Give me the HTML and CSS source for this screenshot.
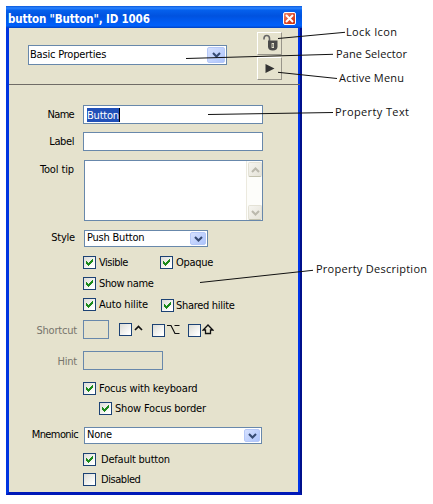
FILE: index.html
```html
<!DOCTYPE html>
<html lang="en">
<head>
<meta charset="utf-8">
<title>Button properties</title>
<link rel="stylesheet" href="styles.css">
</head>
<body>
<svg class="defs" width="0" height="0" aria-hidden="true">
  <symbol id="tick" viewBox="0 0 7 7"><path d="M0 2h1v1h1v1h1v-1h1v-1h1v-1h1v-1h1v3h-1v1h-1v1h-1v1h-1v1h-1v-1h-1v-1h-1z" fill="#1b8a1b"/></symbol>
  <symbol id="chevron" viewBox="0 0 9 6"><path d="M1 1l3.5 3.5L8 1" fill="none" stroke="currentColor" stroke-width="2.1"/></symbol>
</svg>
<main class="window">
  <header class="titlebar">
    <h1 class="title">button "Button", ID 1006</h1>
    <button class="close" aria-label="Close"><svg width="11" height="11" viewBox="0 0 11 11"><path d="M2 2l7 7M9 2L2 9" stroke="#fff" stroke-width="2"/></svg></button>
  </header>
  <section class="toolbar">
    <div class="select pane"><span class="t-basic">Basic Properties</span><i class="drop"><svg width="9" height="6"><use href="#chevron"/></svg></i></div>
    <div class="tools">
      <button class="tool lock" aria-label="Lock"><svg width="15" height="17" viewBox="0 0 15 17"><path d="M1 5.500V4.500Q1 1.500 3.700 1.500Q6.500 1.500 6.500 4.500V7" fill="none" stroke="#666" stroke-width="1.600"/><path d="M5 6.500h9.500v6q0 4-4.700 4q-4.800 0-4.800-4z" fill="#4a4a4a"/><path d="M9.800 9v5" stroke="#e5e2cd" stroke-width="2.400"/><path d="M9.800 10v3" stroke="#4a4a4a" stroke-width=".8"/></svg></button>
      <button class="tool" aria-label="Menu"><svg width="10" height="9" viewBox="0 0 10 9"><path d="M.5 0L9.500 4.500L.5 9z" fill="#333"/></svg></button>
    </div>
  </section>
  <section class="form">
    <div class="row name"><label class="t-name">Name</label><div class="field"><span class="selected">Button</span></div></div>
    <div class="row lab"><label class="t-label">Label</label><div class="field"></div></div>
    <div class="row tip"><label class="t-tip">Tool tip</label>
      <div class="area"><div class="scroll">
        <i class="arrow up"><svg width="9" height="6"><use href="#chevron"/></svg></i>
        <i class="arrow"><svg width="9" height="6"><use href="#chevron"/></svg></i>
      </div></div>
    </div>
    <div class="row style"><label class="t-style">Style</label><div class="select"><span class="t-push">Push Button</span><i class="drop"><svg width="9" height="6"><use href="#chevron"/></svg></i></div></div>
    <div class="row checks visible">
      <div class="check first"><i class="box"><svg width="7" height="7"><use href="#tick"/></svg></i><span class="t-visible">Visible</span></div>
      <div class="check"><i class="box"><svg width="7" height="7"><use href="#tick"/></svg></i><span class="t-opaque">Opaque</span></div>
    </div>
    <div class="row checks show"><div class="check"><i class="box"><svg width="7" height="7"><use href="#tick"/></svg></i><span class="t-show">Show name</span></div></div>
    <div class="row checks auto">
      <div class="check first"><i class="box"><svg width="7" height="7"><use href="#tick"/></svg></i><span class="t-auto">Auto hilite</span></div>
      <div class="check shared"><i class="box"><svg width="7" height="7"><use href="#tick"/></svg></i><span class="t-shared">Shared hilite</span></div>
    </div>
    <div class="row shortcut off"><label class="t-short">Shortcut</label><div class="field"></div>
      <div class="key control"><i class="box"></i><svg width="9" height="6" viewBox="0 0 9 6"><path d="M1 5l3.500-3.500L8 5" fill="none" stroke="#111" stroke-width="1.700"/></svg></div>
      <div class="key option"><i class="box"></i><svg width="13" height="11" viewBox="0 0 13 11"><path d="M0 1.500h4l4 8h4.500M7.500 1.500h5" fill="none" stroke="#111" stroke-width="1.200"/></svg></div>
      <div class="key shift"><i class="box"></i><svg width="12" height="11" viewBox="0 0 12 11"><path d="M6 1L1.200 6H3.500V9.500H8.500V6H10.800z" fill="none" stroke="#111" stroke-width="1.300"/></svg></div>
    </div>
    <div class="row hint off"><label class="t-hint">Hint</label><div class="field"></div></div>
    <div class="row checks focus"><div class="check"><i class="box"><svg width="7" height="7"><use href="#tick"/></svg></i><span class="t-focus">Focus with keyboard</span></div></div>
    <div class="row checks border"><div class="check"><i class="box"><svg width="7" height="7"><use href="#tick"/></svg></i><span class="t-border">Show Focus border</span></div></div>
    <div class="row mnemonic"><label class="t-mnem">Mnemonic</label><div class="select"><span class="t-none">None</span><i class="drop"><svg width="9" height="6"><use href="#chevron"/></svg></i></div></div>
    <div class="row checks default"><div class="check"><i class="box"><svg width="7" height="7"><use href="#tick"/></svg></i><span class="t-default">Default button</span></div></div>
    <div class="row checks disabled"><div class="check"><i class="box"></i><span class="t-disabled">Disabled</span></div></div>
  </section>
</main>
<svg class="callouts" width="433" height="504" viewBox="0 0 433 504">
  <path d="M278 38.500L345 32.300M186 58.500L333 54.300M278 72.300L337 78.500M208 114.500L333 112.500M200 282.500L313 270.300"/>
  <text x="346" y="36" textLength="51">Lock Icon</text>
  <text x="336" y="58" textLength="71">Pane Selector</text>
  <text x="339" y="82" textLength="65">Active Menu</text>
  <text x="335" y="116" textLength="74">Property Text</text>
  <text x="316" y="273" textLength="111">Property Description</text>
</svg>
</body>
</html>
```
FILE: styles.css
```css
* { box-sizing: border-box; }
body {
  margin: 0;
  width: 433px;
  height: 504px;
  overflow: hidden;
  position: relative;
  background: #fff;
  color: #000;
  font: 11px/13px "DejaVu Sans Condensed", "DejaVu Sans", sans-serif;
}
.defs { position: absolute; }
i { font-style: normal; }
svg { display: block; }
button { padding: 0; }
span, label, h1 { white-space: nowrap; }

.window {
  width: 296px;
  height: 489px;
  margin: 6px 0 0 6px;
  float: left;
  background: #e5e2cd;
  border: solid #0034e0;
  border-width: 0 2px 3px 3px;
  border-right-color: #00108c;
  border-bottom-color: #0019b8;
}
.titlebar {
  height: 22px;
  margin: 0 -2px 0 -3px;
  padding: 0 6px 0 2px;
  display: flex;
  align-items: center;
  justify-content: space-between;
  background: linear-gradient(#0a58da, #2b84ff 9%, #0560ec 20%, #0052df 45%, #005cf4 75%, #0060fa 90%, #0040c0);
}
.title {
  margin: 3px 0 0;
  color: #fff;
  font: bold 11.5px/14px "DejaVu Sans Condensed", sans-serif;
  letter-spacing: -.16px;
}
.close {
  width: 13px;
  height: 13px;
  margin-top: 3px;
  border: 1px solid #fff;
  border-radius: 2px;
  background: linear-gradient(135deg, #ef8a6d, #dc4524 60%, #c8300c);
}
.toolbar {
  height: 57px;
  padding: 4px 16px 0 19px;
  display: flex;
  justify-content: space-between;
  border-bottom: 1px solid #6f6c66;
}
.toolbar, .form { border-right: 2px solid #0034e8; }
.toolbar { border-right-width: 0; box-shadow: inset -2px 0 #0034e8; padding-right: 18px; }
.form { height: 407px; overflow: hidden; }
.select {
  height: 18px;
  padding: 1px 1px 1px 2px;
  display: flex;
  justify-content: space-between;
  background: #fff;
  border: 1px solid #6888ab;
}
.pane { width: 199px; height: 20px; margin-top: 13px; padding-left: 1px; }
.pane span { margin-top: 1px; }
.drop {
  width: 16px;
  display: flex;
  align-items: center;
  justify-content: center;
  color: #364a72;
  border: 1px solid #b5c8f8;
  border-radius: 2px;
  background: linear-gradient(135deg, #d6e1ff, #adc4fb);
}
.pane .drop { width: 18px; }
.tools { display: flex; flex-direction: column; gap: 2px; width: 25px; }
.tool {
  width: 25px;
  height: 23px;
  display: flex;
  align-items: center;
  justify-content: center;
  background: #e5e2cd;
  border: 1px solid;
  border-color: #fff #98958a #98958a #fff;
}
.lock { padding: 0 0 2px 2px; }

.row { display: flex; height: 13px; }
.row label { width: 65px; margin-right: 9px; text-align: right; flex: none; }
.field { width: 180px; height: 19px; background: #fff; border: 1px solid #6888ab; }
.name { height: 19px; margin-top: 20px; }
.name label { padding-top: 3px; }
.name .field { padding: 2px 0 0 3px; }
.selected {
  display: block;
  width: 33px;
  height: 14px;
  line-height: 15px;
  color: #fff;
  background: #2150b8;
  border-right: 1px solid #000;
  letter-spacing: -.2px;
}
.lab { height: 19px; margin-top: 8px; }
.lab label { padding-top: 3px; }
.tip { height: 61px; margin-top: 9px; }
.tip label { margin-right: 10px; padding-top: 3px; }
.area {
  width: 179px;
  display: flex;
  justify-content: flex-end;
  background: #fff;
  border: 1px solid #6888ab;
}
.scroll {
  width: 16px;
  display: flex;
  flex-direction: column;
  justify-content: space-between;
  padding: 1px 1px 0;
  background: #fdfdfa;
  border-left: 1px solid #eceadf;
}
.arrow {
  width: 14px;
  height: 15px;
  display: flex;
  align-items: center;
  justify-content: center;
  color: #bbb9ad;
  background: linear-gradient(135deg, #f6f5f0, #e5e3d8);
  border: 1px solid #e4e2d6;
  border-bottom-color: #c3c2af;
  border-radius: 2px;
}
.up svg { transform: rotate(180deg); }
.style { height: 17px; margin-top: 9px; }
.style label { width: 66px; padding-top: 1px; }
.style .select { width: 124px; height: 17px; }
.style .select span, .mnemonic .select span { margin-top: -1px; }
.checks { padding-left: 74px; }
.check { display: flex; gap: 3px; }
.box {
  width: 13px;
  height: 13px;
  flex: none;
  display: flex;
  align-items: center;
  justify-content: center;
  border: 1px solid #1c4274;
  background: linear-gradient(135deg, #dcdcd6, #fff 85%);
}
.first { width: 77px; }
.visible { margin-top: 9px; }
.show { margin-top: 8px; }
.auto { margin-top: 8px; }
.shared { margin: 1px 0 0 1px; gap: 2px; }
.off label { color: #77756c; width: 68px; margin-right: 6px; padding-top: 4px; }
.off .field { background: transparent; }
.shortcut { height: 19px; margin-top: 9px; }
.shortcut .field { width: 26px; }
.key { display: flex; margin-top: 4px; }
.control { margin: 3px 0 0 10px; width: 33px; }
.control svg { margin: 2px 0 0 2px; }
.option { width: 36px; }
.option svg { margin: 0 0 0 2px; }
.shift svg { margin: 0 0 0 1px; }
.hint { height: 19px; margin-top: 12px; }
.hint .field { width: 80px; }
.focus { margin-top: 12px; }
.border { padding-left: 90px; margin-top: 7px; }
.mnemonic { height: 17px; margin-top: 12px; }
.row.mnemonic label { width: 69px; margin-right: 6px; padding-top: 1px; }
.mnemonic .select { width: 178px; height: 17px; }
.default { margin-top: 9px; }
.disabled { margin-top: 7px; }
.default .check, .disabled .check { gap: 5px; }

.t-basic { letter-spacing: -.2px; }
.t-name { letter-spacing: -.7px; }
.t-label { letter-spacing: -.4px; }
.t-tip { letter-spacing: -.12px; }
.t-style { letter-spacing: -.2px; }
.t-push { letter-spacing: -.22px; }
.t-visible { letter-spacing: -.5px; }
.t-opaque { letter-spacing: -.3px; }
.t-show { letter-spacing: -.4px; }
.t-auto { letter-spacing: -.15px; }
.t-shared { letter-spacing: -.3px; }
.t-short, .t-hint { letter-spacing: -.2px; }
.t-focus { letter-spacing: -.15px; }
.t-border { letter-spacing: -.18px; }
.t-mnem { letter-spacing: -.6px; }
.t-none { letter-spacing: -.25px; }
.t-default { letter-spacing: -.22px; }
.t-disabled { letter-spacing: -.45px; }

.callouts { position: absolute; left: 0; top: 0; pointer-events: none; }
.callouts path { fill: none; stroke: #111; stroke-width: 1; }
.callouts text { font: 11px "Open Sans", "Noto Sans", sans-serif; fill: #111; }
```
